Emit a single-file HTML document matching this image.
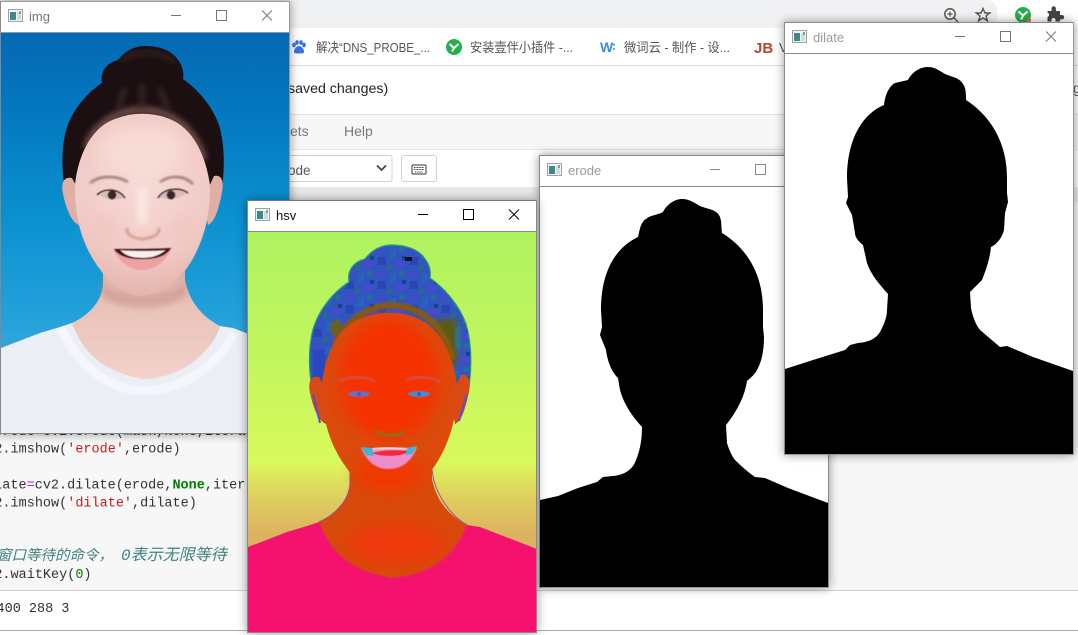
<!DOCTYPE html>
<html>
<head>
<meta charset="utf-8">
<title>OpenCV windows</title>
<style>
html,body{margin:0;padding:0;background:#fff;width:1078px;height:635px;overflow:hidden}
svg{display:block;position:absolute;left:0;top:0}
text{white-space:pre}
.sans{font-family:"Liberation Sans","Noto Sans CJK SC",sans-serif}
.cjk{font-family:"Liberation Sans","Noto Sans CJK SC",sans-serif;font-size:13px;fill:#555}
.code{font-family:"Liberation Mono","Noto Sans CJK SC",monospace;font-size:13.5px;fill:#333}
.cmt{font-family:"Liberation Mono","Noto Sans CJK SC",monospace;font-style:italic;fill:#408080}
.tt{font-family:"Liberation Sans",sans-serif;font-size:13px}
</style>
</head>
<body>
<svg width="1078" height="635" viewBox="0 0 1078 635" xmlns="http://www.w3.org/2000/svg">
<defs>
  <filter id="sh" filterUnits="userSpaceOnUse" x="-30" y="-30" width="1140" height="700">
    <feDropShadow dx="0" dy="0" stdDeviation="5" flood-color="#000" flood-opacity=".42"/>
  </filter>
  <filter id="b05" x="-30%" y="-30%" width="160%" height="160%"><feGaussianBlur stdDeviation=".6"/></filter>
  <filter id="b1" x="-30%" y="-30%" width="160%" height="160%"><feGaussianBlur stdDeviation="1"/></filter>
  <filter id="b3" x="-40%" y="-40%" width="180%" height="180%"><feGaussianBlur stdDeviation="3"/></filter>
  <filter id="b6" x="-50%" y="-50%" width="200%" height="200%"><feGaussianBlur stdDeviation="7"/></filter>

  <linearGradient id="sky" x1="0" y1="33" x2="0" y2="433" gradientUnits="userSpaceOnUse">
    <stop offset="0" stop-color="#0469b3"/>
    <stop offset=".2" stop-color="#0478c0"/>
    <stop offset=".45" stop-color="#0a90cf"/>
    <stop offset=".7" stop-color="#22a0da"/>
    <stop offset="1" stop-color="#5ab4e4"/>
  </linearGradient>
  <linearGradient id="hsvbg" x1="0" y1="33" x2="0" y2="361" gradientUnits="userSpaceOnUse">
    <stop offset="0" stop-color="#aef260"/>
    <stop offset=".4" stop-color="#c4f65e"/>
    <stop offset=".7" stop-color="#d8f95c"/>
    <stop offset=".72" stop-color="#dcf25c"/>
    <stop offset=".8" stop-color="#dfd25e"/>
    <stop offset=".92" stop-color="#dcb460"/>
    <stop offset="1" stop-color="#dcb060"/>
  </linearGradient>
  <radialGradient id="skin" cx="142" cy="185" r="115" gradientUnits="userSpaceOnUse">
    <stop offset="0" stop-color="#f7dad6"/>
    <stop offset=".6" stop-color="#f1cbc6"/>
    <stop offset="1" stop-color="#e3b2aa"/>
  </radialGradient>
  <linearGradient id="neck" x1="0" y1="265" x2="0" y2="380" gradientUnits="userSpaceOnUse">
    <stop offset="0" stop-color="#d8aaa0"/>
    <stop offset=".35" stop-color="#e8c2b8"/>
    <stop offset="1" stop-color="#f2d2cb"/>
  </linearGradient>
  <pattern id="blk" patternUnits="userSpaceOnUse" width="32" height="24">
    <rect width="32" height="24" fill="#2f55c0"/>
    <rect x="0" y="0" width="10" height="6" fill="#3f4cc6"/>
    <rect x="14" y="3" width="7" height="9" fill="#2a62b8"/>
    <rect x="24" y="0" width="6" height="5" fill="#2a6a9a"/>
    <rect x="3" y="10" width="8" height="8" fill="#2b46b0"/>
    <rect x="20" y="14" width="10" height="6" fill="#4a48cc"/>
    <rect x="12" y="18" width="5" height="5" fill="#2a6a86"/>
    <rect x="27" y="9" width="4" height="4" fill="#1d3f88"/>
  </pattern>

  <path id="hair" d="M102,83 C100,72 106,63 118,60 C124,52 133,46 145,46 C158,46 172,50 178,60 C183,66 184,74 183,79 C196,88 212,105 219,125 C225,145 225,170 221,195 L214,212 L70,212 C64,190 60,165 64,140 C67,118 82,96 102,83Z"/>
  <path id="face" d="M75,185 C78,155 92,125 118,118 C133,112 155,112 172,120 C190,128 205,150 210,185 C211,215 203,245 187,268 C172,286 156,296 142,296 C128,296 111,286 99,268 C84,248 74,220 75,185Z"/>
  <path id="earL" d="M72,178 C63,176 61,184 63,194 C66,208 71,222 79,225 L84,200Z"/>
  <path id="earR" d="M214,176 C222,174 224,182 222,192 C219,208 215,222 208,225 L203,200Z"/>
  <path id="nk" d="M103,262 L103,285 C102,300 90,315 72,323 L76,345 C90,372 120,379 143,379 C170,379 205,365 220,326 C205,318 190,305 185,280 L185,262Z"/>
  <path id="shirt" d="M1,348 L40,333 L60,327 L72,323 C80,345 95,370 143,379 C185,378 212,350 220,326 L233,328 L290,350 L290,434 L1,434Z"/>

  <clipPath id="imgclip"><rect x="1" y="33" width="288" height="400"/></clipPath>
  <clipPath id="hairclip"><use href="#hair"/></clipPath>

  <g id="wicon">
    <rect x=".5" y=".5" width="14" height="12" fill="#f4f6f6" stroke="#9aa4a8"/>
    <rect x="2" y="3" width="6" height="8" fill="#3d8a86"/>
    <rect x="9" y="3" width="4" height="8" fill="#cfdcdc"/>
    <rect x="11" y="2" width="2" height="3" fill="#8a9aa0"/>
  </g>
  <g id="ctrl" fill="none" stroke="currentColor" stroke-width="1">
    <path d="M171,15.5H181"/>
    <rect x="216.5" y="10.5" width="10" height="10"/>
    <path d="M262,10.5L272,20.5M272,10.5L262,20.5"/>
  </g>
</defs>

<!-- browser background -->
<rect width="1078" height="635" fill="#fff"/>
<rect x="0" y="0" width="997" height="28" fill="#f0f1f3" rx="10"/>
<rect x="0" y="0" width="600" height="28" fill="#f0f1f3"/>
<rect x="0" y="65" width="1078" height="1" fill="#dcdcdc"/>
<rect x="0" y="114" width="1078" height="36" fill="#f7f7f7"/>
<rect x="0" y="114" width="1078" height="1" fill="#e2e2e2"/>
<rect x="0" y="149" width="1078" height="1" fill="#e7e7e7"/>
<rect x="0" y="187" width="1078" height="403" fill="#f7f7f7"/>
<rect x="0" y="187" width="1078" height="15" fill="#e9e9e9"/>
<rect x="0" y="590" width="1078" height="1" fill="#cfcfcf"/>
<rect x="0" y="630" width="1078" height="1" fill="#aaa"/>

<!-- toolbar icons -->
<g fill="none" stroke="#555" stroke-width="1.5">
  <circle cx="950" cy="14" r="5.2"/>
  <path d="M954,18L958,22"/>
  <path d="M947.5,14H952.5M950,11.5V16.5" stroke-width="1.2"/>
  <path d="M983,8.5L985,13H989.8L986,16L987.4,20.7L983,18L978.6,20.7L980,16L976.2,13H981Z" stroke-width="1.4"/>
</g>
<circle cx="1023" cy="15" r="8" fill="#21b04b"/>
<path d="M1018.5,11.5L1023,15.5L1027.5,11.5M1023.5,15L1021,19.5" fill="none" stroke="#fff" stroke-width="2"/>
<circle cx="1029" cy="20" r="2" fill="#e8605a"/>
<path d="M1048,12H1052V9.5A2.2,2.2 0 0 1 1056.4,9.5V12H1060.5V16H1062.5A2.2,2.2 0 0 1 1062.5,20.4H1060.5V22.5H1056V21A2,2 0 0 0 1052,21V22.5H1048V18A2.2,2.2 0 0 0 1048,13.8Z" fill="#444" transform="translate(-.5,-1)"/>

<!-- bookmarks -->
<g fill="#3a6fe0" transform="translate(-1,0)">
  <ellipse cx="295" cy="45" rx="1.8" ry="2.4"/>
  <ellipse cx="298" cy="42.5" rx="1.8" ry="2.4"/>
  <ellipse cx="302" cy="42.5" rx="1.8" ry="2.4"/>
  <ellipse cx="305" cy="45" rx="1.8" ry="2.4"/>
  <path d="M300,46C297,46 294.5,50 295,52C295.5,54 298,53.4 300,53.4C302,53.4 304.5,54 305,52C305.500,50 303,46 300,46Z"/>
</g>
<text class="cjk" x="316" y="52" textLength="114" lengthAdjust="spacingAndGlyphs">解决“DNS_PROBE_...</text>
<circle cx="454" cy="47" r="8" fill="#21b04b"/>
<path d="M449.500,44L454,48L458.500,44M454.500,47.500L452,51.500" fill="none" stroke="#fff" stroke-width="2"/>
<text class="cjk" x="470" y="52" textLength="103" lengthAdjust="spacingAndGlyphs">安装壹伴小插件 -...</text>
<text x="600" y="52" class="sans" font-size="14" font-weight="700" fill="#3b8de8">W</text>
<circle cx="614" cy="44.500" r="1" fill="#3b8de8"/>
<circle cx="614" cy="49" r="1" fill="#3b8de8"/>
<text class="cjk" x="624" y="52" textLength="106" lengthAdjust="spacingAndGlyphs">微词云 - 制作 - 设...</text>
<text x="754" y="53" class="sans" font-size="15" font-weight="700" fill="#b5492c">JB</text>
<text class="cjk" x="779" y="52">V</text>

<!-- notebook header -->
<text class="sans" x="288" y="93" font-size="14.2" fill="#222">saved changes)</text>
<text class="sans" x="1073" y="93" font-size="14" fill="#555">g</text>
<text class="sans" x="290" y="136" font-size="14" fill="#777">ets</text>
<text class="sans" x="344" y="136" font-size="14" fill="#777">Help</text>

<rect x="270" y="155.500" width="122" height="26" rx="2" fill="#fff" stroke="#d2d2d2"/>
<text class="sans" x="288" y="175" font-size="13.500" fill="#555">ode</text>
<path d="M377,165.500L381.500,170L386,165.500" fill="none" stroke="#444" stroke-width="1.800"/>
<rect x="401.500" y="155.500" width="35" height="26" rx="2" fill="#fff" stroke="#d2d2d2"/>
<rect x="412" y="165" width="14" height="9" rx="1" fill="none" stroke="#333"/>
<path d="M414,167.500H424M414,169.500H424M415,172H423" stroke="#333" stroke-width="1" stroke-dasharray="1 .6" fill="none"/>

<!-- code -->
<text class="code" x="-5.700" y="435">erode=cv2.erode(mask,None,iterat</text>
<text class="code" x="-5.700" y="452.500">2.imshow(<tspan fill="#ba2121">'erode'</tspan>,erode)</text>
<text class="code" x="-22" y="488.500">dilate<tspan fill="#aa22ff">=</tspan>cv2.dilate(erode,<tspan fill="#008000" font-weight="700">None</tspan>,iter</text>
<text class="code" x="-5.700" y="506.500">2.imshow(<tspan fill="#ba2121">'dilate'</tspan>,dilate)</text>
<text class="cmt" x="-3" y="560" font-size="14.500">窗口等待的命令，</text>
<text class="cmt" x="121" y="560" font-size="16">0表示无限等待</text>
<text class="code" x="-5.700" y="578">2.waitKey(<tspan fill="#008000">0</tspan>)</text>
<text class="code" x="-3.500" y="612">400 288 3</text>

<!-- img window -->
<g filter="url(#sh)">
  <rect x="0" y="1" width="290" height="433" fill="#fff"/>
  <rect x="0" y="1" width="290" height="1" fill="#999"/>
  <rect x="0" y="1" width="1" height="433" fill="#888"/>
  <rect x="289" y="1" width="1" height="433" fill="#999"/>
  <rect x="0" y="433" width="290" height="1" fill="#888"/>
  <rect x="0" y="32" width="290" height="1" fill="#8a9aa8"/>
</g>
<use href="#wicon" x="8" y="9"/>
<text class="tt" x="29" y="21" fill="#777">img</text>
<use href="#ctrl" y="0" color="#777"/>
<g clip-path="url(#imgclip)">
  <rect x="1" y="33" width="288" height="400" fill="url(#sky)"/>
  <use href="#hair" fill="#1b0f12"/>
  <g clip-path="url(#hairclip)">
    <path d="M120,60C134,50 160,50 174,62" fill="none" stroke="#33201f" stroke-width="5" filter="url(#b3)"/>
    <path d="M86,148C94,124 118,110 142,110C170,110 195,128 204,160" fill="none" stroke="#6e4e48" stroke-width="7" filter="url(#b3)"/>
    <path d="M142,84V108M125,88L118,110M160,88L168,110" stroke="#3a2628" stroke-width="5" filter="url(#b3)"/>
  </g>
  <use href="#earL" fill="#dfaea5"/>
  <use href="#earR" fill="#dfaea5"/>
  <use href="#nk" fill="url(#neck)"/>
  <use href="#shirt" fill="#eceef5"/>
  <path d="M61,328C71,350 95,388 143,391C185,390 222,362 233,333" fill="none" stroke="#f5f6fb" stroke-width="9" filter="url(#b05)"/>
  <path d="M100,282C115,298 170,298 186,282L186,296C165,312 120,312 102,296Z" fill="#c0897e" opacity=".45" filter="url(#b3)"/>
  <use href="#face" fill="url(#skin)"/>
  <ellipse cx="142" cy="150" rx="42" ry="24" fill="#fbe3de" opacity=".55" filter="url(#b6)"/>
  <ellipse cx="102" cy="228" rx="14" ry="12" fill="#f2c2be" opacity=".6" filter="url(#b6)"/>
  <ellipse cx="182" cy="228" rx="14" ry="12" fill="#f2c2be" opacity=".6" filter="url(#b6)"/>
  <!-- brows -->
  <path d="M90,183C100,175 116,175 128,182" fill="none" stroke="#9a7670" stroke-width="2.400" filter="url(#b1)"/>
  <path d="M160,182C170,175 184,175 193,184" fill="none" stroke="#9a7670" stroke-width="2.400" filter="url(#b1)"/>
  <!-- eyes -->
  <g filter="url(#b05)">
    <path d="M99,195C105,190 118,190 124,198C116,201 106,200 99,195Z" fill="#d9bdb8"/>
    <path d="M159,197C165,190 180,189 186,193C180,199 168,201 159,197Z" fill="#d9bdb8"/>
    <circle cx="112" cy="195" r="4.400" fill="#3a2528"/>
    <circle cx="171" cy="195" r="4.400" fill="#3a2528"/>
    <path d="M97,195C104,188 118,188 125,198" fill="none" stroke="#3a2528" stroke-width="1.500"/>
    <path d="M158,198C164,188 180,187 188,193" fill="none" stroke="#3a2528" stroke-width="1.500"/>
  </g>
  <!-- nose -->
  <rect x="137" y="188" width="11" height="36" fill="#fdeeea" opacity=".7" filter="url(#b3)"/>
  <path d="M127,228C126,235 133,238 142,239C152,238 160,235 159,228" fill="none" stroke="#cf978e" stroke-width="2.500" filter="url(#b1)"/>
  <!-- mouth -->
  <path d="M113,249C125,249 130,248 143,250C155,248 162,249 172,248C165,262 155,270 142,270C128,270 118,260 113,249Z" fill="#eea0a2" filter="url(#b05)"/>
  <path d="M114,249C128,249 158,249 171,248C165,257 155,259 142,259C130,259 120,257 114,249Z" fill="#3a1518" filter="url(#b05)"/>
  <path d="M120,250C130,251 155,251 166,250C158,257 150,258 142,258C134,258 126,257 120,250Z" fill="#f8efeb" filter="url(#b05)"/>
</g>

<!-- erode window -->
<g filter="url(#sh)">
  <rect x="539" y="155" width="290" height="433" fill="#fff"/>
  <rect x="539" y="155" width="290" height="1" fill="#888"/>
  <rect x="539" y="155" width="1" height="433" fill="#888"/>
  <rect x="828" y="155" width="1" height="433" fill="#888"/>
  <rect x="539" y="587" width="290" height="1" fill="#999"/>
  <rect x="539" y="186" width="290" height="1" fill="#888"/>
</g>
<use href="#wicon" x="547" y="163"/>
<text class="tt" x="568" y="175" fill="#999">erode</text>
<use href="#ctrl" x="539" y="154" color="#888"/>
<path fill="#000" d="M682,199 C689,199 695,203 700,206 C707,209 715,209 719,215 C722,220 721,226 722,233 C745,247 763,272 763,310 L763,327 L764,337 C764,350 762,360 758,368 C755,375 750,378 747,381 C745,395 738,410 726,425 L727,443 C729,450 732,456 735,460 C742,467 748,472 755,477 L765,478 L788,488 L828,503 V587 H540 V500 L558,496 L578,488 L597,482 L603,477 L613,476 C625,475 633,469 636,460 C640,450 642,440 642,427 C633,417 624,405 620,390 L618,378 C610,370 607,358 606,350 L600,335 L602,327 L601,310 C601,272 615,248 638,237 C640,228 641,222 646,219 C650,215 658,215 663,212 C667,204 675,199 682,199Z"/>

<!-- dilate window -->
<g filter="url(#sh)">
  <rect x="784" y="22" width="290" height="433" fill="#fff"/>
  <rect x="784" y="22" width="290" height="1" fill="#888"/>
  <rect x="784" y="22" width="1" height="433" fill="#888"/>
  <rect x="1073" y="22" width="1" height="433" fill="#999"/>
  <rect x="784" y="454" width="290" height="1" fill="#999"/>
  <rect x="784" y="53" width="290" height="1" fill="#888"/>
</g>
<use href="#wicon" x="792" y="30"/>
<text class="tt" x="813" y="42" fill="#999">dilate</text>
<use href="#ctrl" x="784" y="21" color="#777"/>
<path fill="#000" d="M928,67 C935,67 940,71 945,74 C952,77 960,78 963,84 C966,88 966,94 966,100 C988,114 1007,140 1007,178 L1007,193 L1008,202 L1005,213 L1004,230 C1002,238 997,244 991,247 C990,258 986,270 982,280 L970,292 L971,308 C973,318 976,325 980,330 L1000,347 L1007,346 L1033,357 L1073,371 V454 H785 V369 L813,360 L845,350 L850,345 L858,343 C870,342 878,338 882,328 C885,322 887,316 887,310 L888,294 C880,285 871,275 867,263 L863,245 C858,241 855,237 855,233 L852,215 L846,203 L848,197 L847,178 C847,140 862,114 884,105 C885,96 888,87 895,83 L908,80 C912,72 920,67 928,67Z"/>

<!-- hsv window -->
<g filter="url(#sh)">
  <rect x="247" y="200" width="290" height="433" fill="#fff"/>
  <rect x="247" y="200" width="290" height="1" fill="#777"/>
  <rect x="247" y="200" width="1" height="433" fill="#888"/>
  <rect x="536" y="200" width="1" height="433" fill="#888"/>
  <rect x="247" y="632" width="290" height="1" fill="#888"/>
  <rect x="247" y="231" width="290" height="1" fill="#888"/>
</g>
<use href="#wicon" x="255" y="208"/>
<text class="tt" x="276" y="220" fill="#111">hsv</text>
<use href="#ctrl" x="247" y="199" color="#000"/>
<g transform="translate(247,199)" clip-path="url(#imgclip)">
  <rect x="1" y="33" width="288" height="400" fill="url(#hsvbg)"/>
  <use href="#hair" fill="url(#blk)" stroke="#2a9a86" stroke-width="1.200"/>
  <g clip-path="url(#hairclip)">
    <rect x="190" y="120" width="20" height="45" fill="#5d5a12" filter="url(#b3)"/>
    <rect x="84" y="122" width="10" height="14" fill="#6a6018"/>
    <rect x="158" y="58" width="7" height="4" fill="#10102a"/>
    <rect x="208" y="128" width="6" height="22" fill="#2e6f8a"/>
    <rect x="66" y="150" width="12" height="30" fill="#2a48c0"/>
    <path d="M88,146C96,124 120,108 142,106C170,106 195,122 206,160" fill="none" stroke="#8a5a10" stroke-width="6" filter="url(#b1)"/>
  </g>
  <use href="#earL" fill="#d84a18"/>
  <use href="#earR" fill="#d84a18"/>
  <path d="M66,195L73,224M220,195L212,222" stroke="#5a50c8" stroke-width="2" fill="none"/>
  <use href="#nk" fill="#d84a0a"/>
  <use href="#shirt" fill="#f5126e"/>
  <path d="M72,323C80,345 95,370 143,379C185,378 212,350 220,326" fill="none" stroke="#e02a5a" stroke-width="1.500"/>
  <path d="M103,270L103,285C102,300 90,315 72,323M185,270C187,295 205,318 220,326" fill="none" stroke="#9a4aa0" stroke-width="1"/>
  <use href="#face" fill="#dc4a0c"/>
  <ellipse cx="142" cy="180" rx="50" ry="60" fill="#f43004" filter="url(#b6)"/>
  <ellipse cx="142" cy="275" rx="34" ry="18" fill="#f03806" filter="url(#b6)"/>
  <ellipse cx="150" cy="345" rx="50" ry="20" fill="#ee3a08" filter="url(#b6)"/>
  <path d="M128,232C134,238 150,238 158,232" stroke="#9a6a14" stroke-width="4" fill="none" filter="url(#b1)"/>
  <!-- brows -->
  <path d="M92,182C104,177 116,177 128,182M160,181C170,177 184,177 193,183" fill="none" stroke="#c8607a" stroke-width="1.600" filter="url(#b1)"/>
  <!-- eyes -->
  <ellipse cx="112" cy="195" rx="11" ry="3" fill="#6a70c0" filter="url(#b05)"/>
  <ellipse cx="172" cy="195" rx="11" ry="3" fill="#4f8ac8" filter="url(#b05)"/>
  <circle cx="112" cy="195" r="2" fill="#7048c0"/>
  <circle cx="172" cy="195" r="2" fill="#3a58c8"/>
  <!-- mouth -->
  <path d="M114,249C130,250 155,250 170,248C165,262 155,270 142,270C128,270 120,262 114,249Z" fill="#ee8ccc" filter="url(#b05)"/>
  <path d="M125,254C135,251 150,251 162,252C155,258 135,258 125,254Z" fill="#f02838"/>
  <path d="M114,248L124,249L127,257L119,256ZM170,247L161,249L158,256L165,255Z" fill="#38b8d8"/>
  <path d="M125,249C135,248 150,248 160,249L158,251C150,250 135,250 127,251Z" fill="#f4d0dc"/>
</g>
</svg>
</body>
</html>
